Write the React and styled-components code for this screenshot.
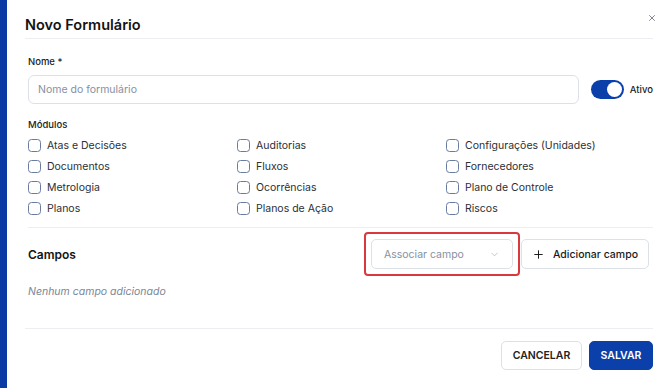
import React from "react";
import styled, { createGlobalStyle } from "styled-components";
import { X, Plus, ChevronDown } from "lucide-react";

const Global = createGlobalStyle`
  html, body { margin: 0; padding: 0; background: #fff; }
  body { font-family: Inter, "Noto Sans", sans-serif; -webkit-font-smoothing: antialiased; }
  * { box-sizing: border-box; }
`;

const BLUE = "#0b3fa9";

const Page = styled.div`
  display: flex;
  width: 670px;
  height: 388px;
  overflow: hidden;
`;

const Strip = styled.div`
  width: 7px;
  flex: none;
  background: #0a3aa3;
`;

const Modal = styled.div`
  flex: 1;
  background: #fff;
  padding: 0 17px 0 18px;
  display: flex;
  flex-direction: column;
`;

const Header = styled.div`
  display: flex;
  justify-content: space-between;
  align-items: flex-start;
  padding-top: 12px;
  border-bottom: 1px solid #eceef2;
`;

const Title = styled.h1`
  margin: 0;
  font-size: 14.5px;
  line-height: 26px;
  font-weight: 600;
  color: #141414;
`;

const CloseBtn = styled.button`
  border: 0;
  background: none;
  padding: 0;
  width: 10px;
  height: 10px;
  margin-top: 1px;
  margin-right: -4px;
  display: flex;
  align-items: center;
  justify-content: center;
  color: #5a5f68;
`;

const Body = styled.div`
  padding: 0 0 28px 3px;
  display: flex;
  flex-direction: column;
  border-bottom: 1px solid #eceef2;
`;

const Label = styled.div`
  font-size: 9.5px;
  line-height: 14px;
  font-weight: 500;
  color: #222;
  margin-top: ${(p) => p.$mt}px;
`;

const NameRow = styled.div`
  display: flex;
  align-items: center;
  margin-top: 6px;
`;

const Input = styled.input`
  flex: 1;
  height: 29px;
  border: 1px solid #dce1e8;
  border-radius: 6px;
  padding: 0 9px;
  font-family: inherit;
  font-size: 10.5px;
  color: #222;
  outline: none;
  &::placeholder { color: #8790a0; }
`;

const Toggle = styled.div`
  width: 33px;
  height: 19px;
  border-radius: 10px;
  background: ${BLUE};
  margin-left: 12px;
  display: flex;
  align-items: center;
  justify-content: flex-end;
  padding: 2px;
`;

const Knob = styled.div`
  width: 15px;
  height: 15px;
  border-radius: 50%;
  background: #fff;
`;

const ToggleText = styled.span`
  font-size: 9.5px;
  font-weight: 500;
  color: #222;
  margin-left: 6px;
`;

const Grid = styled.div`
  display: grid;
  grid-template-columns: 209px 209px 1fr;
  grid-auto-rows: 21px;
  margin-top: 3px;
`;

const CheckItem = styled.label`
  display: flex;
  align-items: center;
  gap: 6px;
  font-size: 10.5px;
  color: #2b2f36;
`;

const Box = styled.span`
  width: 13px;
  height: 13px;
  border: 1.5px solid #6a7ba0;
  border-radius: 3.5px;
  flex: none;
`;

const Divider = styled.div`
  height: 1px;
  background: #eceef2;
  margin-top: 8px;
`;

const CamposRow = styled.div`
  display: flex;
  align-items: center;
  margin-top: 4px;
  margin-right: 4px;
`;

const SectionTitle = styled.div`
  flex: 1;
  font-size: 12px;
  font-weight: 600;
  color: #141414;
  padding-top: 1px;
`;

const Highlight = styled.div`
  border: 2px solid #d8393f;
  border-radius: 4px;
  padding: 5px;
`;

const Select = styled.div`
  width: 142px;
  height: 30px;
  border: 1px solid #dce1e8;
  border-radius: 5px;
  display: flex;
  align-items: center;
  justify-content: space-between;
  padding: 0 12px;
  font-size: 10.5px;
  color: #8790a0;
`;

const AddButton = styled.button`
  margin-left: 1px;
  width: 128px;
  height: 30px;
  border: 1px solid #dce1e8;
  border-radius: 5px;
  background: #fff;
  display: flex;
  align-items: center;
  justify-content: center;
  gap: 8px;
  white-space: nowrap;
  font-family: inherit;
  font-size: 10.5px;
  font-weight: 500;
  color: #1a1a1a;
`;

const Empty = styled.div`
  margin-top: 8px;
  font-size: 10.5px;
  line-height: 16px;
  font-style: italic;
  color: #7b8597;
`;

const Footer = styled.div`
  display: flex;
  justify-content: flex-end;
  gap: 7px;
  padding-top: 12px;
`;

const Button = styled.button`
  height: 29px;
  width: ${(p) => (p.$primary ? 64 : 81)}px;
  padding: 0;
  border-radius: 5px;
  border: 1px solid ${(p) => (p.$primary ? BLUE : "#dce1e8")};
  background: ${(p) => (p.$primary ? BLUE : "#fff")};
  color: ${(p) => (p.$primary ? "#fff" : "#222")};
  font-family: inherit;
  font-size: 10.5px;
  font-weight: 600;
  text-transform: uppercase;
`;

const modules = [
  "Atas e Decisões", "Auditorias", "Configurações (Unidades)",
  "Documentos", "Fluxos", "Fornecedores",
  "Metrologia", "Ocorrências", "Plano de Controle",
  "Planos", "Planos de Ação", "Riscos",
];

export default function App() {
  return (
    <>
      <Global />
      <Page>
        <Strip />
        <Modal>
          <Header>
            <Title>Novo Formulário</Title>
            <CloseBtn aria-label="Fechar"><X size={10} strokeWidth={1.8} /></CloseBtn>
          </Header>
          <Body>
            <Label $mt={16}>Nome *</Label>
            <NameRow>
              <Input placeholder="Nome do formulário" />
              <Toggle><Knob /></Toggle>
              <ToggleText>Ativo</ToggleText>
            </NameRow>
            <Label $mt={14}>Módulos</Label>
            <Grid>
              {modules.map((m) => (
                <CheckItem key={m}><Box />{m}</CheckItem>
              ))}
            </Grid>
            <Divider />
            <CamposRow>
              <SectionTitle>Campos</SectionTitle>
              <Highlight>
                <Select>
                  <span>Associar campo</span>
                  <ChevronDown size={11} strokeWidth={1.5} color="#a8afbb" />
                </Select>
              </Highlight>
              <AddButton><Plus size={13} strokeWidth={1.8} />Adicionar campo</AddButton>
            </CamposRow>
            <Empty>Nenhum campo adicionado</Empty>
          </Body>
          <Footer>
            <Button>Cancelar</Button>
            <Button $primary>Salvar</Button>
          </Footer>
        </Modal>
      </Page>
    </>
  );
}
